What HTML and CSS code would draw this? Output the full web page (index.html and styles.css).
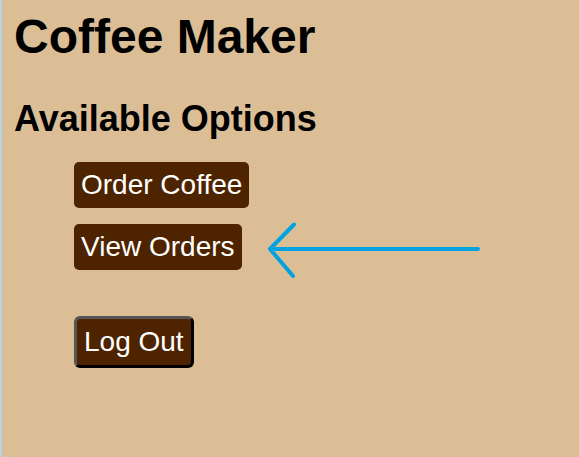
FILE: index.html
```html
<!DOCTYPE html>
<html lang="en">
<head>
<meta charset="utf-8">
<title>Coffee Maker</title>
<link rel="stylesheet" href="styles.css">
</head>
<body>
<h1 class="title">Coffee Maker</h1>
<h2 class="subtitle">Available Options</h2>
<div class="options">
  <button class="btn">Order Coffee</button>
  <button class="btn">View Orders</button>
  <button class="btn btn-logout">Log Out</button>
</div>
<svg class="arrow" width="220" height="60" viewBox="0 0 220 60" aria-hidden="true">
  <path d="M212 29 H4 M4 29 L28 4.5 M4 29 L27 56" fill="none" stroke="#00a3e0" stroke-width="4" stroke-linecap="round" stroke-linejoin="round"/>
</svg>
</body>
</html>
```
FILE: styles.css
```css
html {
  background: #dbbe96;
}
body {
  margin: 0;
  min-height: 457px;
  box-sizing: border-box;
  border-left: 2px solid #b4d6e4;
  padding: 9px 0 0 12px;
  font-family: "Liberation Sans", Arial, sans-serif;
  color: #000;
  position: relative;
}
.title {
  margin: 0;
  font-size: 48px;
  font-weight: bold;
  line-height: 55px;
}
.subtitle {
  margin: 34px 0 23px;
  font-size: 36px;
  font-weight: bold;
  line-height: 41px;
}
.options {
  display: flex;
  flex-direction: column;
  align-items: flex-start;
  gap: 16px;
  padding-left: 60px;
}
.btn {
  font-family: "Liberation Sans", Arial, sans-serif;
  font-size: 28px;
  line-height: 32px;
  color: #fff;
  background: #4e2400;
  border: none;
  border-radius: 5px;
  padding: 7px 7px 7px 7px;
  margin: 0;
}
.btn-logout {
  margin-top: 30px;
  border: 3px solid;
  border-color: #555 #000 #000 #555;
  border-radius: 6px;
}
.arrow {
  position: absolute;
  left: 264px;
  top: 220px;
}
```
